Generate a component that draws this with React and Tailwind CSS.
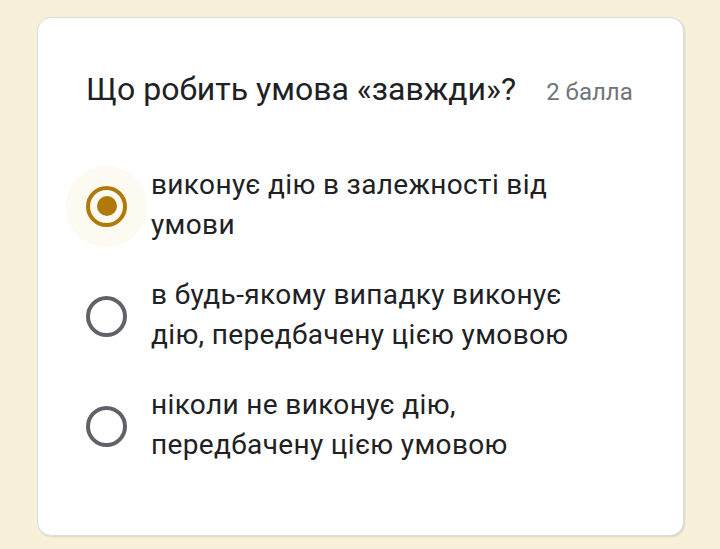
export default function App() {
  const options = [
    { lines: ["виконує дію в залежності від", "умови"], selected: true },
    { lines: ["в будь-якому випадку виконує", "дію, передбачену цією умовою"], selected: false },
    { lines: ["ніколи не виконує дію,", "передбачену цією умовою"], selected: false },
  ];
  return (
    <div className="w-[720px] h-[549px] bg-[#f8f1da] pt-[17px] pl-[37px] overflow-hidden" style={{ fontFamily: "Roboto, 'Noto Sans', sans-serif" }}>
      <div className="w-[647px] h-[519px] rounded-[14px] border border-[#dadce0] bg-white shadow-[1px_1px_2px_rgba(0,0,0,0.12)] pl-[48px] pr-[40px] pt-[49px]">
        <div className="flex items-baseline">
          <span className="text-[32px] leading-[44px] text-[#202124]">Що робить умова «завжди»?</span>
          <span className="ml-[30px] text-[24px] text-[#70757a]">2 балла</span>
        </div>
        <div className="mt-[56px] flex flex-col gap-[32px]">
          {options.map((o, i) => (
            <div key={i} className="flex items-center">
              <div className="relative w-[41px] h-[41px] shrink-0">
                {o.selected && (
                  <div className="absolute left-[-20px] top-[-20px] w-[81px] h-[81px] rounded-full bg-[#fcfaf1]" />
                )}
                <div className={"relative w-[41px] h-[41px] rounded-full border-[4px] flex items-center justify-center " + (o.selected ? "border-[#b07a0b]" : "border-[#5f6368]")}>
                  {o.selected && <div className="w-[20px] h-[20px] rounded-full bg-[#b07a0b]" />}
                </div>
              </div>
              <div className="ml-[24px] -mt-[2px] text-[28px] leading-[40px] tracking-[0.35px] text-[#202124]">
                {o.lines.map((l, j) => (
                  <div key={j}>{l}</div>
                ))}
              </div>
            </div>
          ))}
        </div>
      </div>
    </div>
  );
}
